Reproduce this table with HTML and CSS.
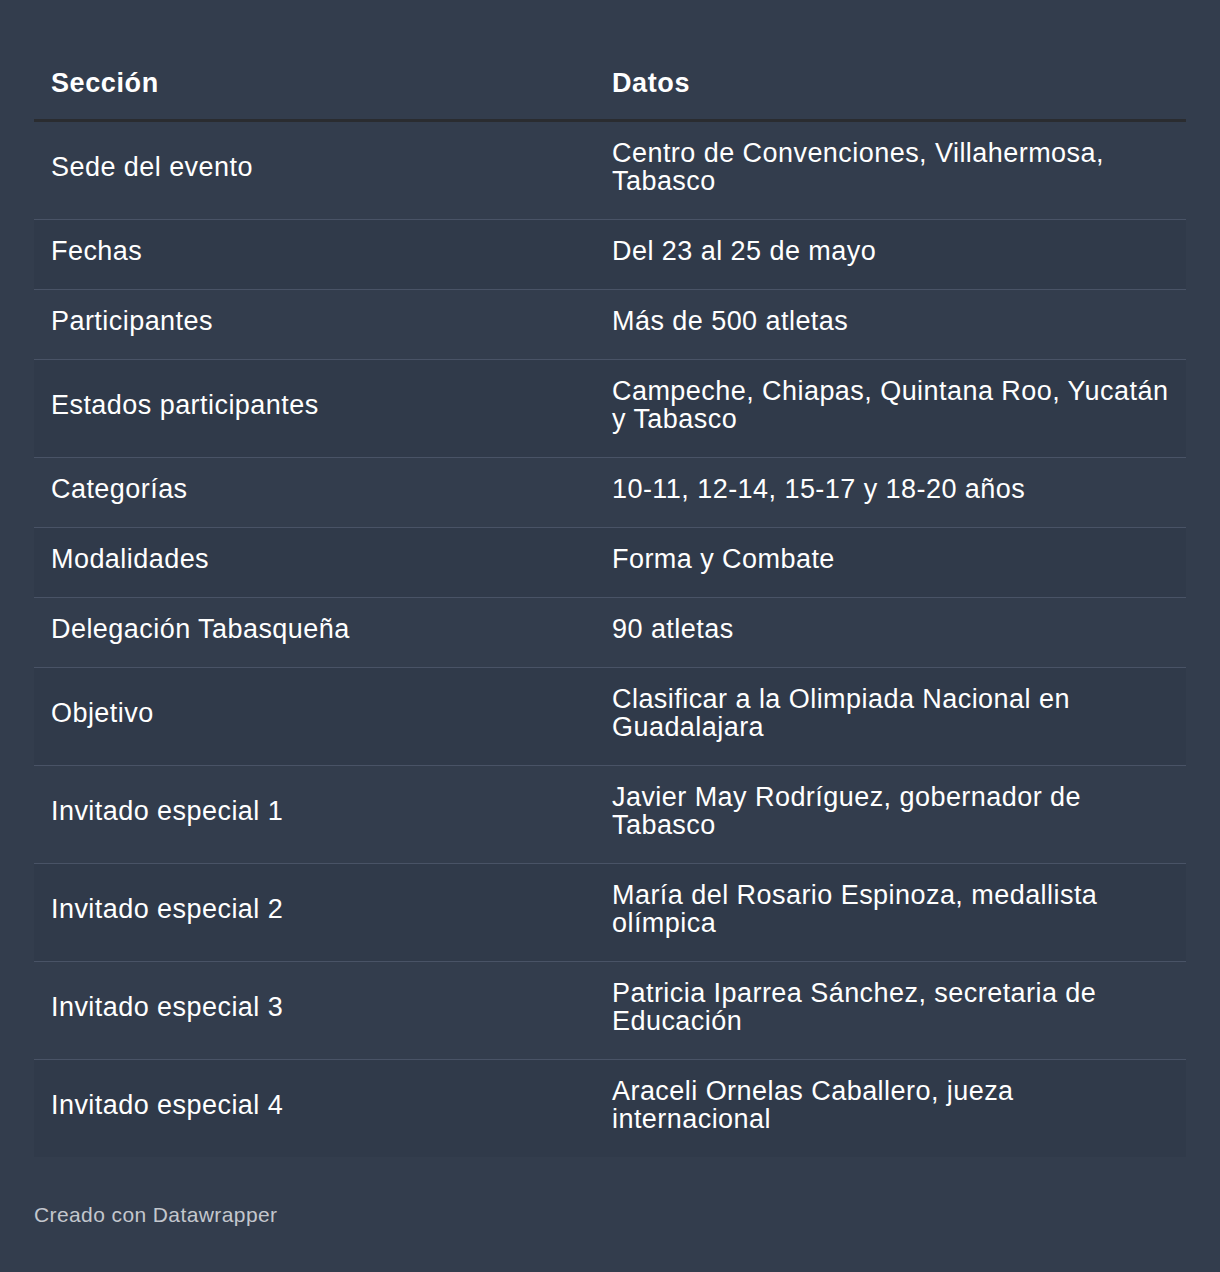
FILE: index.html
```html
<!DOCTYPE html>
<html lang="es">
<head>
  <meta charset="UTF-8" />
  <meta name="viewport" content="width=device-width, initial-scale=1.0" />
  <title>Olimpiada Regional</title>
  <link rel="stylesheet" href="styles.css">
</head>
<body>
  <div id="chart">
    <table class="data-table">
      <thead>
        <tr>
          <th class="col-section">Sección</th>
          <th class="col-data">Datos</th>
        </tr>
      </thead>
      <tbody>
        <tr><td>Sede del evento</td><td>Centro de Convenciones, Villahermosa, Tabasco</td></tr>
        <tr><td>Fechas</td><td>Del 23 al 25 de mayo</td></tr>
        <tr><td>Participantes</td><td>Más de 500 atletas</td></tr>
        <tr><td>Estados participantes</td><td>Campeche, Chiapas, Quintana Roo, Yucatán y Tabasco</td></tr>
        <tr><td>Categorías</td><td>10-11, 12-14, 15-17 y 18-20 años</td></tr>
        <tr><td>Modalidades</td><td>Forma y Combate</td></tr>
        <tr><td>Delegación Tabasqueña</td><td>90 atletas</td></tr>
        <tr><td>Objetivo</td><td>Clasificar a la Olimpiada Nacional en Guadalajara</td></tr>
        <tr><td>Invitado especial 1</td><td>Javier May Rodríguez, gobernador de Tabasco</td></tr>
        <tr><td>Invitado especial 2</td><td>María del Rosario Espinoza, medallista olímpica</td></tr>
        <tr><td>Invitado especial 3</td><td>Patricia Iparrea Sánchez, secretaria de Educación</td></tr>
        <tr><td>Invitado especial 4</td><td>Araceli Ornelas Caballero, jueza internacional</td></tr>
      </tbody>
    </table>
    <p class="footer">Creado con Datawrapper</p>
  </div>
</body>
</html>
```

FILE: styles.css
```css
html, body {
  margin: 0;
  background: #333d4d;
}

body {
  font-family: "Liberation Sans", Arial, sans-serif;
  color: #fff;
}

#chart {
  padding: 50px 34px 0;
}

.data-table {
  width: 100%;
  border-collapse: collapse;
  table-layout: fixed;
  font-size: 27px;
  line-height: 28px;
  letter-spacing: 0.45px;
}

.data-table th,
.data-table td {
  text-align: left;
  vertical-align: middle;
  padding: 17px 17px 24px;
}

.data-table th {
  font-weight: bold;
  letter-spacing: 0.6px;
  padding-top: 19px;
  padding-bottom: 22px;
  border-bottom: 3px solid #2a2c30;
}

.col-section {
  width: 527px;
}

.data-table tbody td {
  border-bottom: 1px solid #495366;
}

.data-table tbody tr:nth-child(even) td {
  background: #303a4a;
}

.data-table tbody tr:last-child td {
  border-bottom: none;
}

.footer {
  margin: 46px 0 0;
  font-size: 21px;
  line-height: 24px;
  letter-spacing: 0.4px;
  color: #c3c7cd;
}
```
